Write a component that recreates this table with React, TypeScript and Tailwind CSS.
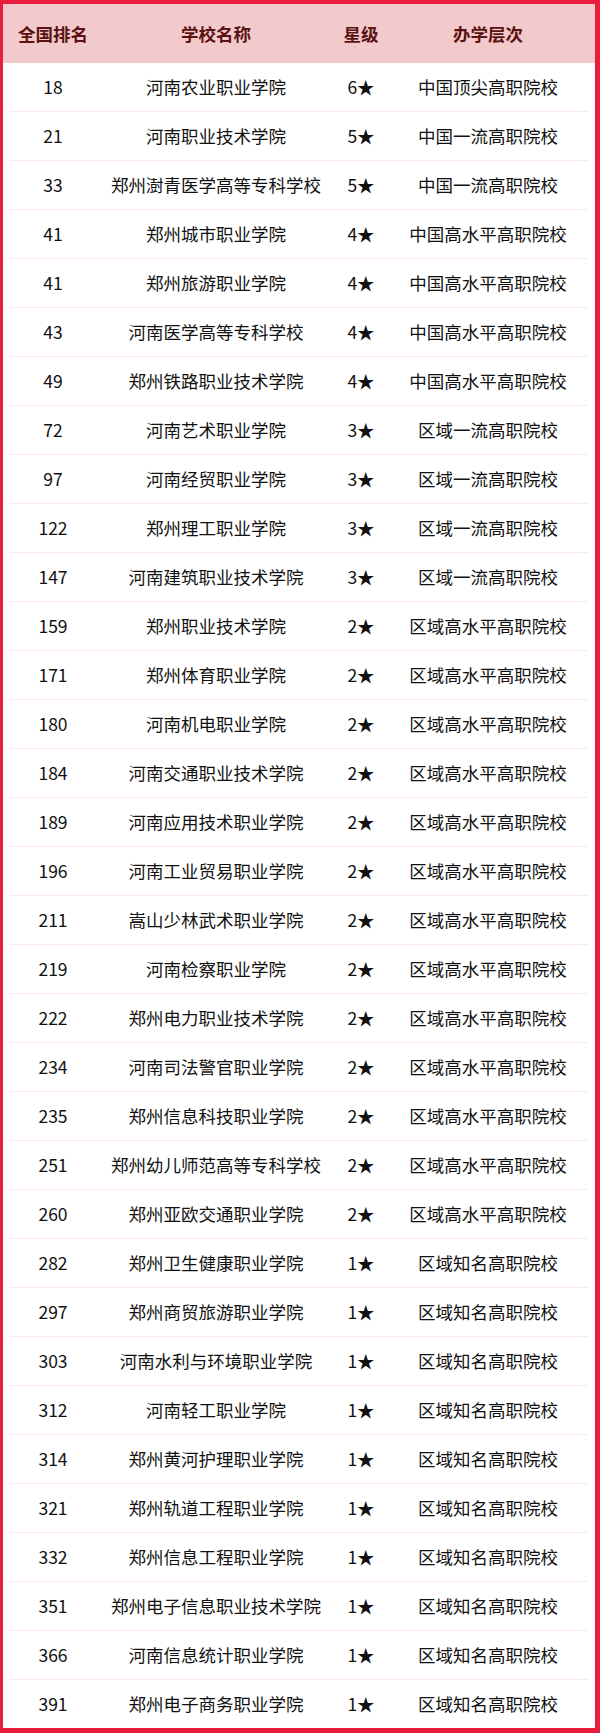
import React from "react";

const rows: [string, string, string, string][] = [
  ["18", "河南农业职业学院", "6★", "中国顶尖高职院校"],
  ["21", "河南职业技术学院", "5★", "中国一流高职院校"],
  ["33", "郑州澍青医学高等专科学校", "5★", "中国一流高职院校"],
  ["41", "郑州城市职业学院", "4★", "中国高水平高职院校"],
  ["41", "郑州旅游职业学院", "4★", "中国高水平高职院校"],
  ["43", "河南医学高等专科学校", "4★", "中国高水平高职院校"],
  ["49", "郑州铁路职业技术学院", "4★", "中国高水平高职院校"],
  ["72", "河南艺术职业学院", "3★", "区域一流高职院校"],
  ["97", "河南经贸职业学院", "3★", "区域一流高职院校"],
  ["122", "郑州理工职业学院", "3★", "区域一流高职院校"],
  ["147", "河南建筑职业技术学院", "3★", "区域一流高职院校"],
  ["159", "郑州职业技术学院", "2★", "区域高水平高职院校"],
  ["171", "郑州体育职业学院", "2★", "区域高水平高职院校"],
  ["180", "河南机电职业学院", "2★", "区域高水平高职院校"],
  ["184", "河南交通职业技术学院", "2★", "区域高水平高职院校"],
  ["189", "河南应用技术职业学院", "2★", "区域高水平高职院校"],
  ["196", "河南工业贸易职业学院", "2★", "区域高水平高职院校"],
  ["211", "嵩山少林武术职业学院", "2★", "区域高水平高职院校"],
  ["219", "河南检察职业学院", "2★", "区域高水平高职院校"],
  ["222", "郑州电力职业技术学院", "2★", "区域高水平高职院校"],
  ["234", "河南司法警官职业学院", "2★", "区域高水平高职院校"],
  ["235", "郑州信息科技职业学院", "2★", "区域高水平高职院校"],
  ["251", "郑州幼儿师范高等专科学校", "2★", "区域高水平高职院校"],
  ["260", "郑州亚欧交通职业学院", "2★", "区域高水平高职院校"],
  ["282", "郑州卫生健康职业学院", "1★", "区域知名高职院校"],
  ["297", "郑州商贸旅游职业学院", "1★", "区域知名高职院校"],
  ["303", "河南水利与环境职业学院", "1★", "区域知名高职院校"],
  ["312", "河南轻工职业学院", "1★", "区域知名高职院校"],
  ["314", "郑州黄河护理职业学院", "1★", "区域知名高职院校"],
  ["321", "郑州轨道工程职业学院", "1★", "区域知名高职院校"],
  ["332", "郑州信息工程职业学院", "1★", "区域知名高职院校"],
  ["351", "郑州电子信息职业技术学院", "1★", "区域知名高职院校"],
  ["366", "河南信息统计职业学院", "1★", "区域知名高职院校"],
  ["391", "郑州电子商务职业学院", "1★", "区域知名高职院校"],
];

const grid = "grid grid-cols-[100px_226px_64px_190px_1fr] items-center text-center";

export default function App() {
  return (
    <div
      className="w-[600px] h-[1733px] bg-[#e81e3c] pt-[4px] pl-[3px] pr-[5px] pb-[5px]"
      style={{ fontFamily: '"Noto Sans CJK SC", "Noto Sans", sans-serif' }}
    >
      <div className="w-full h-full bg-white flex flex-col">
        <div className={`${grid} h-[59px] bg-[#f2cacc] text-[#5a1212] font-bold text-[17.5px] leading-none`}>
          <div>全国排名</div>
          <div>学校名称</div>
          <div>星级</div>
          <div>办学层次</div>
          <div />
        </div>
        {rows.map((r, i) => (
          <React.Fragment key={i}>
            <div className={`${grid} h-[48px] text-[#111111] text-[17.5px] leading-none`}>
              <div>{r[0]}</div>
              <div className="whitespace-nowrap">{r[1]}</div>
              <div>{r[2]}</div>
              <div className="whitespace-nowrap">{r[3]}</div>
              <div />
            </div>
            {i < rows.length - 1 && <div className="mx-[7px] h-px bg-[#fde8eb]" />}
          </React.Fragment>
        ))}
      </div>
    </div>
  );
}
